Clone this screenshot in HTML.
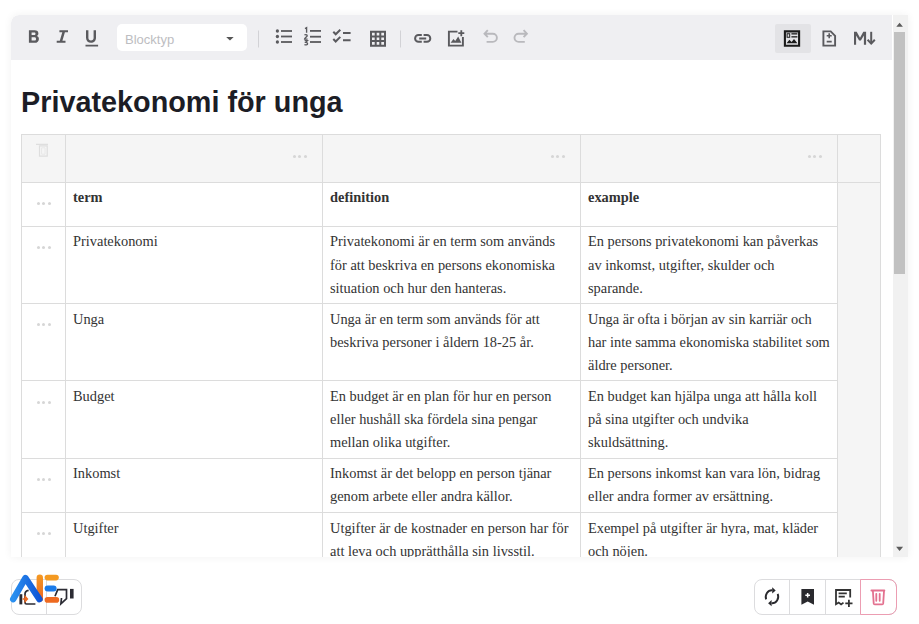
<!DOCTYPE html>
<html><head><meta charset="utf-8">
<style>
*{box-sizing:border-box;margin:0;padding:0}
html,body{width:919px;height:624px;background:#fff;overflow:hidden;position:relative;font-family:"Liberation Sans",sans-serif}
#ed{position:absolute;left:11px;top:15px;width:897px;height:542px;background:#fff;box-shadow:0 0 8px rgba(0,0,0,0.06);border-radius:8px 0 0 0;overflow:hidden}
#tb{position:absolute;left:0;top:0;width:881px;height:45px;background:#efeff2;border-radius:8px 0 0 0}
#sel{position:absolute;left:106px;top:9.4px;width:129.5px;height:26.8px;background:#fff;border-radius:5px}
#sel span{position:absolute;left:8px;top:6.4px;font:13px/17px "Liberation Sans",sans-serif;color:#bdbdc1}
#act{position:absolute;left:764px;top:9px;width:36px;height:29px;background:#e3e3e6;border-radius:2px}
#sb{position:absolute;left:882px;top:0;width:15px;height:542px;background:#f1f1f1}
#thumb{position:absolute;left:1px;top:17px;width:11px;height:242px;background:#c1c1c1}
#title{position:absolute;left:10px;top:70.4px;font:bold 28.8px/34px "Liberation Sans",sans-serif;color:#1c1d26;white-space:nowrap}
#tbl{position:absolute;left:10px;top:118.8px;border-collapse:collapse;table-layout:fixed;font-family:"Liberation Serif",serif;font-size:14.4px;line-height:23.1px;color:#333}
#tbl td{border:1px solid #dcdcdc;vertical-align:top;padding:3.7px 6px 3.3px 7px;position:relative}
#tbl td.g{background:#f5f5f5}
#tbl tr.last td{padding-top:3.9px}
.dots{position:absolute;width:14px;height:3px}
.dots i{position:absolute;top:0;width:3px;height:3px;border-radius:50%;background:#d6d6d6}
.dots i:nth-child(1){left:0}.dots i:nth-child(2){left:5.5px}.dots i:nth-child(3){left:11px}
td .hd{left:14.6px;top:19.3px}
td .hh{right:15.2px;top:20px}
#ov{position:absolute;left:0;top:0;width:919px;height:624px}
.grp{position:absolute;top:579px;height:35.5px;border:1px solid #dcdcde;border-radius:8px;background:#fff}
.grp .dv{position:absolute;top:0;bottom:0;width:1px;background:#dcdcde}
</style></head><body>
<div id="ed">
  <div id="tb">
    <div id="sel"><span>Blocktyp</span></div>
    <div id="act"></div>
  </div>
  <div id="title">Privatekonomi för unga</div>
  <table id="tbl">
    <colgroup><col style="width:44px"><col style="width:257px"><col style="width:258px"><col style="width:257px"><col style="width:43px"></colgroup>
    <tr style="height:48px"><td class="g"></td><td class="g"><div class="dots hh"><i></i><i></i><i></i></div></td><td class="g"><div class="dots hh"><i></i><i></i><i></i></div></td><td class="g"><div class="dots hh"><i></i><i></i><i></i></div></td><td class="g"></td></tr>
    <tr style="height:44px"><td><div class="dots hd"><i></i><i></i><i></i></div></td><td><b>term</b></td><td><b>definition</b></td><td><b>example</b></td><td class="g" rowspan="6"></td></tr>
    <tr><td><div class="dots hd"><i></i><i></i><i></i></div></td><td>Privatekonomi</td><td>Privatekonomi är en term som används för att beskriva en persons ekonomiska situation och hur den hanteras.</td><td>En persons privatekonomi kan påverkas av inkomst, utgifter, skulder och sparande.</td></tr>
    <tr><td><div class="dots hd"><i></i><i></i><i></i></div></td><td>Unga</td><td>Unga är en term som används för att beskriva personer i åldern 18-25 år.</td><td>Unga är ofta i början av sin karriär och har inte samma ekonomiska stabilitet som äldre personer.</td></tr>
    <tr><td><div class="dots hd"><i></i><i></i><i></i></div></td><td>Budget</td><td>En budget är en plan för hur en person eller hushåll ska fördela sina pengar mellan olika utgifter.</td><td>En budget kan hjälpa unga att hålla koll på sina utgifter och undvika skuldsättning.</td></tr>
    <tr><td><div class="dots hd"><i></i><i></i><i></i></div></td><td>Inkomst</td><td>Inkomst är det belopp en person tjänar genom arbete eller andra källor.</td><td>En persons inkomst kan vara lön, bidrag eller andra former av ersättning.</td></tr>
    <tr class="last"><td><div class="dots hd"><i></i><i></i><i></i></div></td><td>Utgifter</td><td>Utgifter är de kostnader en person har för att leva och upprätthålla sin livsstil.</td><td>Exempel på utgifter är hyra, mat, kläder och nöjen.</td></tr>
  </table>
  <div id="sb"><div id="thumb"></div></div>
</div>

<div class="grp" style="left:11px;width:71px"><div class="dv" style="left:34.4px"></div></div>
<div class="grp" style="left:754px;width:142.5px"><div class="dv" style="left:34px"></div><div class="dv" style="left:70px"></div></div>
<div class="grp" style="left:860px;width:36.5px;border-color:#ec9db2;border-radius:0 8px 8px 0;background:transparent"></div>

<svg id="ov" width="919" height="624" viewBox="0 0 919 624" fill="none">
  <!-- B I U -->
  <g fill="#5a5a5e">
    <path fill-rule="evenodd" d="M28.9 30.3h5.7c2.4 0 3.8 1.2 3.8 3.2 0 1.2-.6 2-1.5 2.5 1.3.4 2 1.5 2 2.9 0 2.4-1.6 3.9-4.3 3.9H28.9zM31.6 32.5v2.5h2.6c.8 0 1.3-.5 1.3-1.25s-.5-1.25-1.3-1.25zM31.6 37.3v3.2h2.9c1 0 1.5-.6 1.5-1.6s-.5-1.6-1.5-1.6z"/>
    <path d="M59.4 30.3h8.6v2h-3.1l-2.5 8.5h3.1v2h-8.8v-2h3.1l2.5-8.5h-2.9z"/>
    <path d="M86 30.3h2.4v7.4c0 1.8 1 2.8 2.6 2.8s2.6-1 2.6-2.8v-7.4h2.4v7.5c0 3.1-2 5-5 5s-5-1.9-5-5z M85.5 44.7h12.6v1.7h-12.6z"/>
  </g>
  <!-- select arrow -->
  <path d="M226.2 37h7.5l-3.75 3.6z" fill="#555"/>
  <!-- separators -->
  <path d="M258.5 30.5v17M400.5 30.5v17" stroke="#d2d2d6" stroke-width="1"/>
  <g fill="#5a5a5e">
    <!-- bullet list -->
    <circle cx="277.4" cy="31" r="1.65"/><circle cx="277.4" cy="36.5" r="1.65"/><circle cx="277.4" cy="42" r="1.65"/>
    <rect x="281" y="30.1" width="11" height="1.8"/><rect x="281" y="35.6" width="11" height="1.8"/><rect x="281" y="41.1" width="11" height="1.8"/>
    <!-- numbered -->
    <rect x="310" y="30" width="11" height="1.8"/><rect x="310" y="35.8" width="11" height="1.8"/><rect x="310" y="41.1" width="11" height="1.8"/>
  </g>
  <g stroke="#5a5a5e" fill="none" stroke-width="1.35">
    <path d="M305 28.6l1.6-1v5.2"/>
    <path d="M304.6 35.2c.4-.8 2.6-.9 2.6.5 0 1-2.6 2.2-2.6 3.4h3"/>
    <path d="M304.6 40.6h2.8l-1.6 1.7c1 0 1.8.4 1.8 1.4 0 1.4-2.5 1.5-3 .7"/>
  </g>
  <g stroke="#5a5a5e" fill="none" stroke-width="2">
    <!-- checklist -->
    <path d="M333.3 31.8l2.4 2.5 4.6-4.6M333.3 39l2.4 2.5 4.6-4.6"/>
    <path d="M343 33h7.6M343 40.2h7.6"/>
  </g>
  <!-- table -->
  <path fill="#5a5a5e" fill-rule="evenodd" d="M370 30.8h16v16h-16zM372 32.8v2.7h2.7v-2.7zM376.7 32.8v2.7h2.6v-2.7zM381.3 32.8v2.7h2.7v-2.7zM372 37.5v2.6h2.7v-2.6zM376.7 37.5v2.6h2.6v-2.6zM381.3 37.5v2.6h2.7v-2.6zM372 42.1v2.7h2.7v-2.7zM376.7 42.1v2.7h2.6v-2.7zM381.3 42.1v2.7h2.7v-2.7z"/>
  <!-- link -->
  <g stroke="#5a5a5e" fill="none" stroke-width="2">
    <path d="M421.8 35h-3.3a3.4 3.4 0 0 0 0 6.8h3.3M423.6 35h3.3a3.4 3.4 0 0 1 0 6.8h-3.3M419.2 38.4h7"/>
  </g>
  <!-- image add -->
  <g stroke="#5a5a5e" fill="none" stroke-width="1.9">
    <path d="M457.5 31.6h-8.6v14h14v-8.5"/>
    <path d="M461.3 30.2v6M458.3 33.2h6" stroke-width="1.8"/>
  </g>
  <path d="M450.6 42.8l2.9-3.8 1.7 2 3-4.6 3.2 6.4z" fill="#5a5a5e"/>
  <!-- undo redo -->
  <g stroke="#b9b9bd" fill="none" stroke-width="1.9">
    <path d="M487.8 30.2l-3.3 3.5 3.3 3.5M484.8 33.7h8a4.1 4.1 0 0 1 0 8.2h-6.2"/>
    <path d="M523.6 30.2l3.3 3.5-3.3 3.5M526.6 33.7h-8a4.1 4.1 0 0 0 0 8.2h6.2"/>
  </g>
  <!-- preview icon -->
  <g stroke="#1a1a1a" fill="none" stroke-width="2.1">
    <path d="M784.9 31.4h14.2v14.4h-14.2z"/>
  </g>
  <g fill="#1a1a1a">
    <path fill-rule="evenodd" d="M786.6 33.2h3.6v4.6h-3.6zM787.6 34.2v2.6h1.6v-2.6z"/>
    <rect x="791.4" y="33.2" width="6" height="1.3"/><rect x="791.4" y="36.2" width="6" height="1.3"/>
    <path d="M786.6 43.3l2.8-3.6 2.2 2.4 2.4-3 3.4 4.2z"/>
  </g>
  <!-- diff doc -->
  <g stroke="#5a5a5e" fill="none" stroke-width="1.9">
    <path d="M823.4 31.4h7.3l4.4 4.4v9.8h-11.7z"/>
    <path d="M829.2 33.2v5M826.7 35.7h5M826.7 41.6h5" stroke-width="1.6"/>
  </g>
  <!-- M down -->
  <path d="M854 44.8V31.8h2.7l3.3 6 3.3-6h2.8v13h-2.2v-9.2l-3 5h-1.8l-3-5v9.2z" fill="#5a5a5e"/>
  <path d="M871.2 31.8v11.6" stroke="#5a5a5e" stroke-width="2"/>
  <path d="M867.6 39.8l3.6 3.8 3.6-3.8" stroke="#5a5a5e" stroke-width="2" fill="none"/>
  <!-- scrollbar arrows -->
  <path d="M896.3 26.8l3.3-4.1 3.3 4.1z M896.1 546.8l3.5 4.2 3.5-4.2z" fill="#5c5c5c"/>
  <!-- header trash -->
  <g stroke="#dedede" fill="none" stroke-width="1.2">
    <path d="M36 144.4h12M39.5 145.9h7.7v10.2h-7.7z"/><path d="M41.6 147.8h3.4v6.4h-3.4z" stroke="#e8e8e8" stroke-width="1"/>
  </g>

  <!-- bottom right icons -->
  <g stroke="#2a2a2e" fill="none" stroke-width="1.9">
    <path d="M766.1 599.4A6.2 6.8 0 0 1 772.2 590.3"/>
    <path d="M777.7 593.8A6.2 6.8 0 0 1 771.6 603.3"/>
  </g>
  <path d="M772.2 587.3l3.5 3.1-3.5 3.1zM771.6 600.1l-3.5 3.1 3.5 3.1z" fill="#2a2a2e"/>
  <path fill-rule="evenodd" fill="#2a2a2e" d="M801.4 589h12.6v15.8l-6.3-3.4-6.3 3.4zM806.9 592.9v1.6h-1.6v1.5h1.6v1.6h1.5v-1.6h1.6v-1.5h-1.6v-1.6z"/>
  <g stroke="#333" fill="none" stroke-width="1.8">
    <path d="M850.2 597.6v-7.6h-14.2v14.2l2.7-1.6 2.4 1.8 2.4-1.8"/>
    <path d="M838.6 593.3h8.2M838.6 596.6h6.2"/>
    <path d="M848.9 599.8v7.2M845.3 603.4h7.2"/>
  </g>
  <g stroke="#e3718f" fill="none" stroke-width="1.8" stroke-linecap="round" stroke-linejoin="round">
    <path d="M871.4 590.5h13"/>
    <path d="M872.9 591l.8 12.4q.1.9 1 .9h7.5q.9 0 1-.9l.8-12.4M876.3 593.8v7M879.7 593.8v7"/>
  </g>
  <!-- logo -->
  <defs>
    <linearGradient id="gA" x1="0" y1="0" x2="1" y2="0"><stop offset="0" stop-color="#2a90f0"/><stop offset="1" stop-color="#0f55d6"/></linearGradient>
    <linearGradient id="gI" x1="0" y1="0" x2="0" y2="1"><stop offset="0" stop-color="#f59a22"/><stop offset="1" stop-color="#ec6322"/></linearGradient>
  </defs>
  <g stroke="#2b2b33" fill="none" stroke-width="1.7">
    <path d="M20.85 594.2v10.2" stroke-width="2.9"/>
    <path d="M28.6 590.4C26.2 590.8 25 592 25 594V602.6Q25 604 26.4 604H35.4"/>
    <path d="M55 596.2l2.7-6.6h8.8v9l-5.6 5.2.6-5.8"/>
  </g>
  <path d="M70 588.9h3.6v9.6h-3.6z" fill="#2b2b33"/>
  <rect x="36.6" y="574.6" width="6.4" height="27" rx="3.2" fill="url(#gI)"/>
  <path d="M13.2 599.2L25.4 578 39.4 599.2" stroke="url(#gA)" stroke-width="6.4" stroke-linecap="round" stroke-linejoin="round" fill="none"/>
  <path d="M47.4 577.6h8.6" stroke="#f49a22" stroke-width="5.6" stroke-linecap="round"/>
  <path d="M47.6 588.6h6" stroke="#1b7be9" stroke-width="6" stroke-linecap="round"/>
  <path d="M47.4 599.9h9" stroke="#ee6a20" stroke-width="5.6" stroke-linecap="round"/>
  <path d="M22.6 599h2.6M25.2 596.6l2.2 2.4-2.2 2.4z" stroke="#ee6a20" stroke-width="1.5" fill="#ee6a20"/>
</svg>
</body></html>
